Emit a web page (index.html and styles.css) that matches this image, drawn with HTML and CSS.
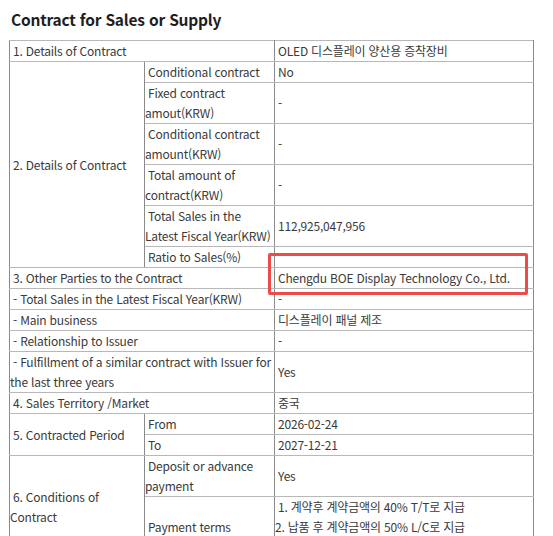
FILE: index.html
```html
<!DOCTYPE html>
<html lang="ko">
<head>
<meta charset="utf-8">
<link rel="stylesheet" href="styles.css">
</head>
<body>
<h1 class="title">Contract for Sales or Supply</h1>
<div class="wrap">
<table class="grid">
<colgroup><col class="c1"><col class="c2"><col class="c3"></colgroup>
<tr><td colspan="2">1. Details of Contract</td><td>OLED 디스플레이 양산용 증착장비</td></tr>
<tr><td rowspan="6">2. Details of Contract</td><td>Conditional contract</td><td>No</td></tr>
<tr><td>Fixed contract amout(KRW)</td><td>-</td></tr>
<tr><td>Conditional contract amount(KRW)</td><td>-</td></tr>
<tr><td>Total amount of contract(KRW)</td><td>-</td></tr>
<tr><td>Total Sales in the Latest Fiscal Year(KRW)</td><td>112,925,047,956</td></tr>
<tr><td>Ratio to Sales(%)</td><td></td></tr>
<tr><td colspan="2">3. Other Parties to the Contract</td><td>Chengdu BOE Display Technology Co., Ltd.</td></tr>
<tr><td colspan="2">- Total Sales in the Latest Fiscal Year(KRW)</td><td>-</td></tr>
<tr><td colspan="2">- Main business</td><td>디스플레이 패널 제조</td></tr>
<tr><td colspan="2">- Relationship to Issuer</td><td>-</td></tr>
<tr><td colspan="2">- Fulfillment of a similar contract with Issuer for the last three years</td><td>Yes</td></tr>
<tr><td colspan="2">4. Sales Territory /Market</td><td>중국</td></tr>
<tr><td rowspan="2">5. Contracted Period</td><td>From</td><td>2026-02-24</td></tr>
<tr><td>To</td><td>2027-12-21</td></tr>
<tr><td rowspan="2">6. Conditions of Contract</td><td>Deposit or advance payment</td><td>Yes</td></tr>
<tr><td>Payment terms</td><td>1. 계약후 계약금액의 40% T/T로 지급<br>2. 납품 후 계약금액의 50% L/C로 지급<br>3. 설치 후 계약금액의 10% T/T로 지급</td></tr>
</table>
<div class="mark"></div>
</div>
</body>
</html>
```
FILE: styles.css
```css
html, body { margin: 0; padding: 0; overflow: hidden; background: #fff; }
body {
  font-family: "Noto Sans CJK KR", "Noto Sans", sans-serif;
  color: #3a3a3a;
  font-size: 12px;
  letter-spacing: -0.2px;
  line-height: 20px;
}
.title {
  margin: 7px 0 0 11px;
  font-size: 15.5px;
  line-height: 24px;
  font-weight: 700;
  color: #1e1e1e;
}
.wrap {
  position: relative;
  margin: 9px 0 0 9px;
  width: 524px;
}
.grid {
  border-collapse: collapse;
  table-layout: fixed;
  width: 524px;
}
.c1 { width: 135px; }
.c2 { width: 130px; }
.c3 { width: 259px; }
.grid td {
  border: 1px solid #b8b8b8;
  border-left-color: #8a8a8a;
  border-right-color: #8a8a8a;
  padding: 0;
  text-indent: 3px;
  vertical-align: middle;
  height: 20px;
}
.mark {
  position: absolute;
  left: 259px;
  top: 213px;
  width: 254px;
  height: 36px;
  border: 3px solid #f04b4b;
  border-radius: 2px;
}
```
